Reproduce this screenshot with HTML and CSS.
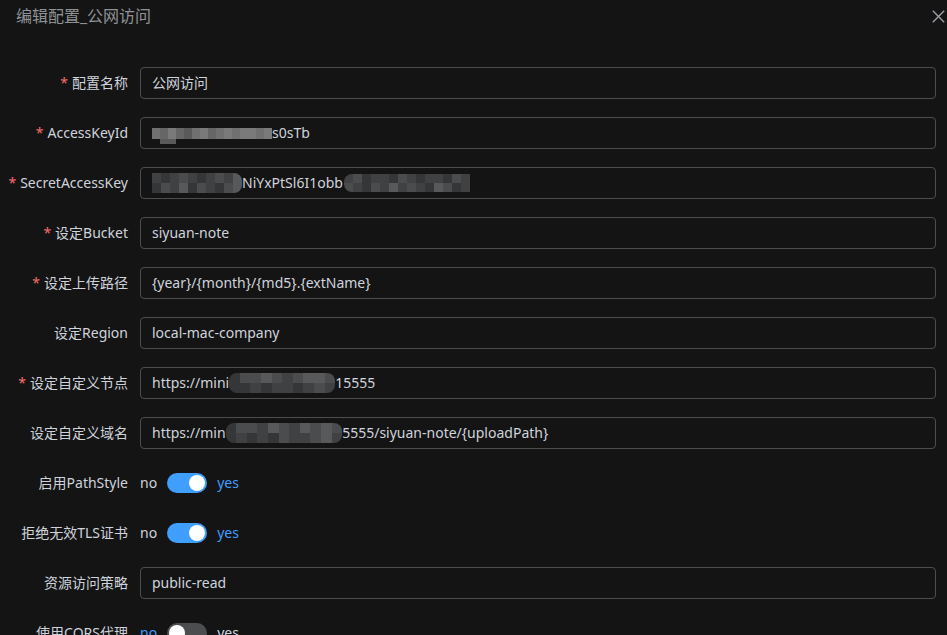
FILE: index.html
```html
<!DOCTYPE html>
<html lang="zh-CN">
<head>
<meta charset="utf-8">
<title>编辑配置_公网访问</title>
<link rel="stylesheet" href="styles.css">
</head>
<body>
<div class="dialog">
  <div class="dialog-header">
    <span class="dialog-title">编辑配置_公网访问</span>
    <button class="close" aria-label="close">
      <svg width="13" height="13" viewBox="0 0 13 13"><path d="M0.8 0.8L12.2 12.2M12.2 0.8L0.8 12.2" stroke="#9a9da2" stroke-width="1.4" fill="none"/></svg>
    </button>
  </div>
  <form class="form">
    <div class="row">
      <label class="label"><span class="req">*</span>配置名称</label>
      <div class="input">公网访问</div>
    </div>
    <div class="row">
      <label class="label"><span class="req">*</span>AccessKeyId</label>
      <div class="input"><span class="mosaic m-ak"><i class="c3"></i><i class="c2"></i><i class="c4"></i><i class="c2"></i><i class="c1"></i><i class="c3"></i><i class="c4"></i><i class="c2"></i><i class="c3"></i><i class="c4"></i><i class="c3"></i><i class="c4"></i><i class="c4"></i><i class="c3"></i><i class="c4"></i><i class="c0"></i><i class="c1"></i><i class="c1"></i><i class="c0"></i><i class="c0"></i><i class="c0"></i><i class="c0"></i><i class="c0"></i><i class="c0"></i><i class="c0"></i><i class="c0"></i><i class="c0"></i><i class="c0"></i><i class="c0"></i><i class="c0"></i></span>s0sTb</div>
    </div>
    <div class="row">
      <label class="label"><span class="req">*</span>SecretAccessKey</label>
      <div class="input"><span class="mosaic m-sk1"><i class="d2"></i><i class="d1"></i><i class="d2"></i><i class="d3"></i><i class="d2"></i><i class="d1"></i><i class="d2"></i><i class="d3"></i><i class="d2"></i><i class="d4"></i><i class="d1"></i><i class="d3"></i><i class="d2"></i><i class="d4"></i><i class="d1"></i><i class="d3"></i><i class="d2"></i><i class="d1"></i><i class="d3"></i><i class="d4"></i></span>NiYxPtSl6I1obb<span class="mosaic m-sk2"><i class="d2"></i><i class="d3"></i><i class="d1"></i><i class="d2"></i><i class="d2"></i><i class="d1"></i><i class="d3"></i><i class="d2"></i><i class="d1"></i><i class="d2"></i><i class="d2"></i><i class="d1"></i><i class="d3"></i><i class="d2"></i><i class="d3"></i><i class="d2"></i><i class="d1"></i><i class="d3"></i><i class="d2"></i><i class="d4"></i><i class="d2"></i><i class="d3"></i><i class="d2"></i><i class="d1"></i><i class="d4"></i><i class="d3"></i><i class="d1"></i><i class="d2"></i></span></div>
    </div>
    <div class="row">
      <label class="label"><span class="req">*</span>设定Bucket</label>
      <div class="input">siyuan-note</div>
    </div>
    <div class="row">
      <label class="label"><span class="req">*</span>设定上传路径</label>
      <div class="input">{year}/{month}/{md5}.{extName}</div>
    </div>
    <div class="row">
      <label class="label">设定Region</label>
      <div class="input">local-mac-company</div>
    </div>
    <div class="row">
      <label class="label"><span class="req">*</span>设定自定义节点</label>
      <div class="input">https://mini<span class="mosaic m-ep"><i class="d1"></i><i class="d3"></i><i class="d3"></i><i class="d4"></i><i class="d3"></i><i class="d2"></i><i class="d3"></i><i class="d4"></i><i class="d4"></i><i class="d3"></i><i class="d1"></i><i class="d1"></i><i class="d2"></i><i class="d1"></i><i class="d2"></i><i class="d2"></i><i class="d1"></i><i class="d2"></i><i class="d3"></i><i class="d2"></i></span>15555</div>
    </div>
    <div class="row">
      <label class="label">设定自定义域名</label>
      <div class="input">https://min<span class="mosaic m-dm"><i class="d1"></i><i class="d3"></i><i class="d3"></i><i class="d2"></i><i class="d4"></i><i class="d3"></i><i class="d2"></i><i class="d4"></i><i class="d3"></i><i class="d4"></i><i class="d3"></i><i class="d1"></i><i class="d2"></i><i class="d1"></i><i class="d2"></i><i class="d1"></i><i class="d3"></i><i class="d2"></i><i class="d2"></i><i class="d3"></i><i class="d4"></i><i class="d2"></i></span>5555/siyuan-note/{uploadPath}</div>
    </div>
    <div class="row">
      <label class="label">启用PathStyle</label>
      <div class="switch-wrap">
        <span class="sw-text">no</span>
        <span class="switch on"><span class="knob"></span></span>
        <span class="sw-text active">yes</span>
      </div>
    </div>
    <div class="row">
      <label class="label">拒绝无效TLS证书</label>
      <div class="switch-wrap">
        <span class="sw-text">no</span>
        <span class="switch on"><span class="knob"></span></span>
        <span class="sw-text active">yes</span>
      </div>
    </div>
    <div class="row">
      <label class="label">资源访问策略</label>
      <div class="input">public-read</div>
    </div>
    <div class="row">
      <label class="label">使用CORS代理</label>
      <div class="switch-wrap">
        <span class="sw-text active">no</span>
        <span class="switch"><span class="knob"></span></span>
        <span class="sw-text">yes</span>
      </div>
    </div>
  </form>
</div>
</body>
</html>
```

FILE: styles.css
```css
html, body {
  margin: 0;
  padding: 0;
  background: #141414;
  overflow: hidden;
}
body {
  font-family: "Noto Sans", "Noto Sans CJK SC", sans-serif;
  font-size: 14px;
  color: #cfd3dc;
}
.dialog {
  width: 947px;
  height: 635px;
}
.dialog-header {
  height: 32px;
  box-sizing: border-box;
  padding: 4px 0 0 16px;
  display: flex;
  justify-content: space-between;
  align-items: flex-start;
}
.dialog-title {
  font-size: 16px;
  line-height: 24px;
  color: #8f9296;
}
.close {
  background: none;
  border: 0;
  padding: 0;
  width: 18px;
  height: 24px;
  display: flex;
  align-items: center;
  justify-content: center;
}
.form {
  padding: 35px 11px 0 0;
  margin: 0;
}
.row {
  display: flex;
  align-items: center;
  height: 32px;
  margin-bottom: 18px;
}
.label {
  width: 140px;
  flex: none;
  box-sizing: border-box;
  padding-right: 12px;
  text-align: right;
  color: #cfd3dc;
  white-space: nowrap;
  line-height: 32px;
}
.req {
  color: #f56c6c;
  margin-right: 4px;
}
.input {
  flex: 1;
  height: 32px;
  box-sizing: border-box;
  border: 1px solid #4c4d4f;
  border-radius: 4px;
  padding: 0 11px;
  line-height: 30px;
  color: #cfd3dc;
  white-space: nowrap;
  overflow: hidden;
  display: flex;
  align-items: center;
}
.mosaic {
  display: inline-grid;
  flex: none;
  filter: blur(0.6px);
}
.mosaic i {
  display: block;
}
.m-ak {
  grid-template-columns: repeat(15, 8px);
  grid-template-rows: 11px 5px;
  margin-top: 5px;
}
.m-sk1 {
  grid-template-columns: repeat(10, 9px);
  grid-template-rows: 10px 10px;
  border-radius: 0 8px 8px 0;
  overflow: hidden;
}
.m-sk2 {
  grid-template-columns: repeat(14, 9px);
  grid-template-rows: 9px 9px;
  margin-left: 1px;
  border-radius: 8px 0 0 8px;
  overflow: hidden;
}
.m-ep {
  grid-template-columns: repeat(10, 10.6px);
  grid-template-rows: 10px 10px;
  border-radius: 8px;
  overflow: hidden;
}
.m-dm {
  grid-template-columns: repeat(11, 10.6px);
  grid-template-rows: 10px 10px;
  border-radius: 8px;
  overflow: hidden;
}
.c0 { background: transparent; }
.c1 { background: #5a5a5a; }
.c2 { background: #666666; }
.c3 { background: #707070; }
.c4 { background: #7a7a7a; }
.d1 { background: #353637; }
.d2 { background: #404143; }
.d3 { background: #4b4c4e; }
.d4 { background: #58595b; }
.switch-wrap {
  display: flex;
  align-items: center;
  height: 32px;
}
.sw-text {
  color: #cfd3dc;
  line-height: 20px;
}
.sw-text.active {
  color: #409eff;
}
.switch {
  position: relative;
  width: 40px;
  height: 20px;
  border-radius: 10px;
  background: #4c4d4f;
  margin: 0 10px;
  box-sizing: border-box;
}
.switch.on {
  background: #409eff;
}
.knob {
  position: absolute;
  top: 2px;
  left: 2px;
  width: 16px;
  height: 16px;
  border-radius: 50%;
  background: #ffffff;
}
.switch.on .knob {
  left: 22px;
}
```
